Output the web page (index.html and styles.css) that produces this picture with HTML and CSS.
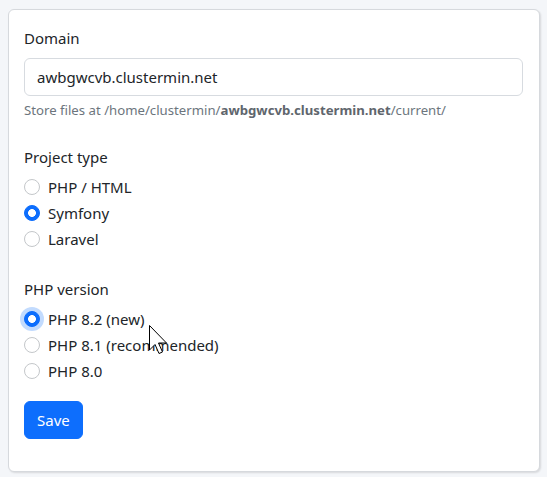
FILE: index.html
```html
<!DOCTYPE html>
<html lang="en">
<head>
<meta charset="utf-8">
<title>Settings</title>
<link rel="stylesheet" href="styles.css">
</head>
<body>
<div class="page">
  <div class="card">
    <form class="card-body">
      <div class="group">
        <label class="form-label" for="domain">Domain</label>
        <input class="form-control" id="domain" type="text" value="awbgwcvb.clustermin.net">
        <div class="form-text">Store files at /home/clustermin/<b>awbgwcvb.clustermin.net</b>/current/</div>
      </div>
      <div class="group group-radio">
        <div class="form-label">Project type</div>
        <label class="form-check"><input type="radio" name="type" class="radio"><span>PHP / HTML</span></label>
        <label class="form-check"><input type="radio" name="type" class="radio" checked><span>Symfony</span></label>
        <label class="form-check"><input type="radio" name="type" class="radio"><span>Laravel</span></label>
      </div>
      <div class="group group-radio group-last">
        <div class="form-label">PHP version</div>
        <label class="form-check"><input type="radio" name="php" class="radio focus" checked><span>PHP 8.2 (new)</span></label>
        <label class="form-check"><input type="radio" name="php" class="radio"><span>PHP 8.1 (recommended)</span></label>
        <label class="form-check"><input type="radio" name="php" class="radio"><span>PHP 8.0</span></label>
      </div>
      <div class="actions">
        <button type="button" class="btn">Save</button>
      </div>
    </form>
  </div>
  <svg class="cursor" width="19" height="30" viewBox="0 0 19 30" aria-hidden="true">
    <path d="M0.5 0.5 L0.5 25 L6 19.5 L10 28.5 L13.5 27 L9.5 18 L17.5 18 Z" fill="#fff" stroke="#000" stroke-width="1" stroke-linejoin="miter"/>
  </svg>
</div>
</body>
</html>
```
FILE: styles.css
```css
* { box-sizing: border-box; }
html, body { margin: 0; padding: 0; }
body {
  background: #f4f6f9;
  font-family: "Noto Sans", "Open Sans", sans-serif;
  font-size: 15px;
  line-height: 1.6;
  color: #212529;
}
.page {
  position: relative;
  width: 547px;
  height: 477px;
  padding: 9px 7px 0 8px;
}
.card {
  background: #fff;
  border: 1px solid #d6d9dd;
  border-radius: 6px;
  box-shadow: 1px 1px 2px rgba(0,0,0,0.12);
}
.card-body {
  display: flex;
  flex-direction: column;
  padding: 16px 16px 16px 15px;
  margin: 0;
}
.group {
  display: flex;
  flex-direction: column;
  margin-bottom: 24px;
}
.group-radio { margin-bottom: 26px; }
.group-radio .form-label { margin-bottom: 6px; }
.group-radio.group-last { margin-bottom: 18px; }
.form-label {
  display: block;
  margin-bottom: 8px;
  line-height: 24px;
}
.form-control {
  display: block;
  width: 100%;
  height: 38px;
  padding: 6px 12px;
  font: inherit;
  color: #212529;
  border: 1px solid #d7dbe0;
  border-radius: 6px;
  background: #fff;
  outline: none;
}
.form-text {
  margin-top: 4px;
  font-size: 13.2px;
  line-height: 21px;
  color: #6c757d;
}
.form-text b { font-weight: 700; color: #5f666d; }
.form-check {
  display: flex;
  align-items: flex-start;
  min-height: 24px;
  line-height: 24px;
  margin-bottom: 2px;
}
.form-check:last-child { margin-bottom: 0; }
.radio {
  appearance: none;
  -webkit-appearance: none;
  width: 16px;
  height: 16px;
  margin: 4px 8px 0 0;
  border: 1px solid #c4c7ca;
  border-radius: 50%;
  background: #fff;
  flex-shrink: 0;
}
.radio:checked {
  background: #0d6efd radial-gradient(circle, #fff 0, #fff 3.6px, transparent 4.2px);
  border-color: #0d6efd;
}
.radio.focus {
  box-shadow: 0 0 0 4px rgba(13,110,253,0.25);
}
.actions { display: flex; margin-bottom: 16px; }
.btn {
  height: 38px;
  padding: 6px 12px;
  font: inherit;
  color: #fff;
  background: #0d6efd;
  border: 1px solid #0d6efd;
  border-radius: 6px;
}
.cursor {
  position: absolute;
  left: 149px;
  top: 325px;
}
```
